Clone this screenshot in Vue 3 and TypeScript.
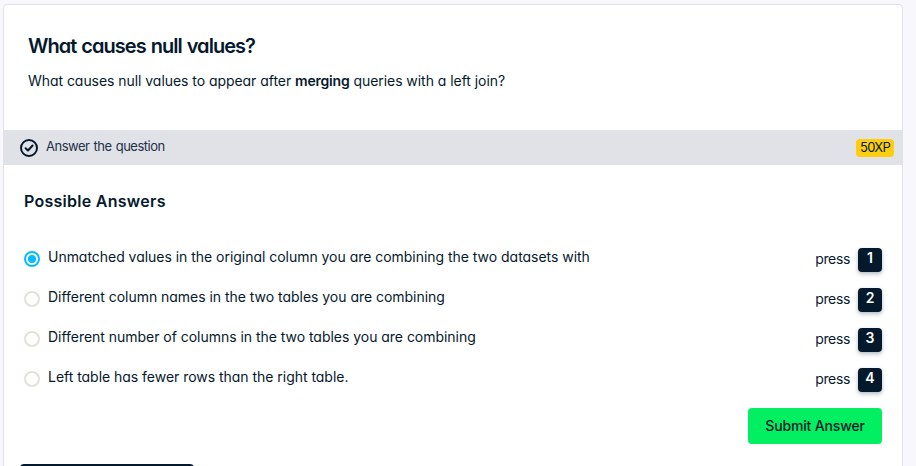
<script setup lang="ts">
import { ref } from 'vue'

interface Answer {
  key: number
  text: string
}

const answers: Answer[] = [
  { key: 1, text: 'Unmatched values in the original column you are combining the two datasets with' },
  { key: 2, text: 'Different column names in the two tables you are combining' },
  { key: 3, text: 'Different number of columns in the two tables you are combining' },
  { key: 4, text: 'Left table has fewer rows than the right table.' },
]
const selected = ref(1)
</script>

<template>
  <div class="page">
    <main class="card">
      <section class="intro">
        <h1>What causes null values?</h1>
        <p>What causes null values to appear after <strong>merging</strong> queries with a left join?</p>
      </section>
      <header class="bar">
        <svg class="check" viewBox="0 0 18 18" fill="none">
          <circle cx="9" cy="9" r="8" stroke="currentColor" stroke-width="2" />
          <path d="M5.6 9.2 8 11.5l4.6-5" stroke="currentColor" stroke-width="2" stroke-linecap="round" stroke-linejoin="round" />
        </svg>
        <span class="bar-title">Answer the question</span>
        <span class="xp">50XP</span>
      </header>
      <section class="answers">
        <h2>Possible Answers</h2>
        <ul>
          <li v-for="a in answers" :key="a.key" @click="selected = a.key">
            <span class="radio" :class="{ on: selected === a.key }"></span>
            <span class="label">{{ a.text }}</span>
            <span class="press">press</span>
            <kbd>{{ a.key }}</kbd>
          </li>
        </ul>
        <div class="actions">
          <button type="button">Submit Answer</button>
        </div>
        <div class="next"></div>
      </section>
    </main>
  </div>
</template>

<style>
body {
  margin: 0;
  background: #f7f7fc;
}
</style>

<style scoped>
.page {
  box-sizing: border-box;
  height: 466px;
  overflow: hidden;
  padding: 4px 13px 0 3px;
  background: #f7f7fc;
  color: #05192d;
  font-family: Inter, "Liberation Sans", sans-serif;
  font-feature-settings: "cv11" 1;
  font-size: 14px;
}
.card {
  box-sizing: border-box;
  height: 480px;
  border: 1px solid #e1e1e8;
  border-radius: 4px;
  background: #fff;
}
.intro {
  box-sizing: border-box;
  height: 125px;
  padding: 29px 24px 0;
}
h1 {
  margin: 0;
  font-size: 20px;
  line-height: 24px;
  font-weight: 600;
  letter-spacing: -0.95px;
  word-spacing: 0.8px;
}
p {
  margin: 11px 0 0;
  line-height: 24px;
  letter-spacing: -0.05px;
  white-space: nowrap;
}
strong {
  font-weight: 600;
  letter-spacing: -0.2px;
}
.bar {
  display: flex;
  align-items: center;
  box-sizing: border-box;
  height: 35px;
  padding: 0 8px 0 16px;
  background: #e1e2e7;
}
.check {
  width: 18px;
  height: 18px;
}
.bar-title {
  margin: -3px auto 0 8px;
  font-size: 13px;
  letter-spacing: -0.5px;
  word-spacing: 1px;
  color: #213147;
}
.xp {
  width: 38px;
  height: 18px;
  border-radius: 4px;
  background: #fcce0d;
  font-size: 13px;
  letter-spacing: -0.7px;
  line-height: 17px;
  text-align: center;
}
.answers {
  padding: 24px 20px 0;
}
h2 {
  margin: 0;
  font-size: 16px;
  line-height: 24px;
  font-weight: 600;
  letter-spacing: 0.27px;
}
ul {
  margin: 31px 0 0;
  padding: 0;
  list-style: none;
}
li {
  display: flex;
  align-items: center;
  height: 32px;
  margin-bottom: 8px;
}
.radio {
  box-sizing: border-box;
  width: 16px;
  height: 16px;
  margin-top: -2px;
  border: 2px solid #e5e1da;
  border-radius: 50%;
}
.radio.on {
  border-color: #06bdfc;
  background: radial-gradient(circle, #06bdfc 3.7px, #fff 4.5px);
}
.label {
  margin: -7px auto 0 8px;
  letter-spacing: -0.03px;
  white-space: nowrap;
}
.press {
  margin: -4px 8px 0 0;
  letter-spacing: -0.35px;
}
kbd {
  width: 24px;
  height: 24px;
  border-radius: 4px;
  background: #05192d;
  box-shadow: 0 2px 4px rgba(5, 25, 45, 0.3);
  color: #fff;
  font-family: inherit;
  font-size: 14px;
  font-weight: 600;
  line-height: 20px;
  text-align: center;
}
.actions {
  display: flex;
  justify-content: flex-end;
  margin-top: 12px;
}
button {
  width: 134px;
  height: 36px;
  padding: 0 0 2px;
  border: 0;
  border-radius: 4px;
  background: #03ef62;
  color: #05192d;
  font: inherit;
  font-feature-settings: inherit;
  font-weight: 500;
  letter-spacing: -0.15px;
}
.next {
  width: 174px;
  height: 36px;
  margin: 20px 0 0 -4px;
  border-radius: 4px;
  background: #05192d;
}
</style>
